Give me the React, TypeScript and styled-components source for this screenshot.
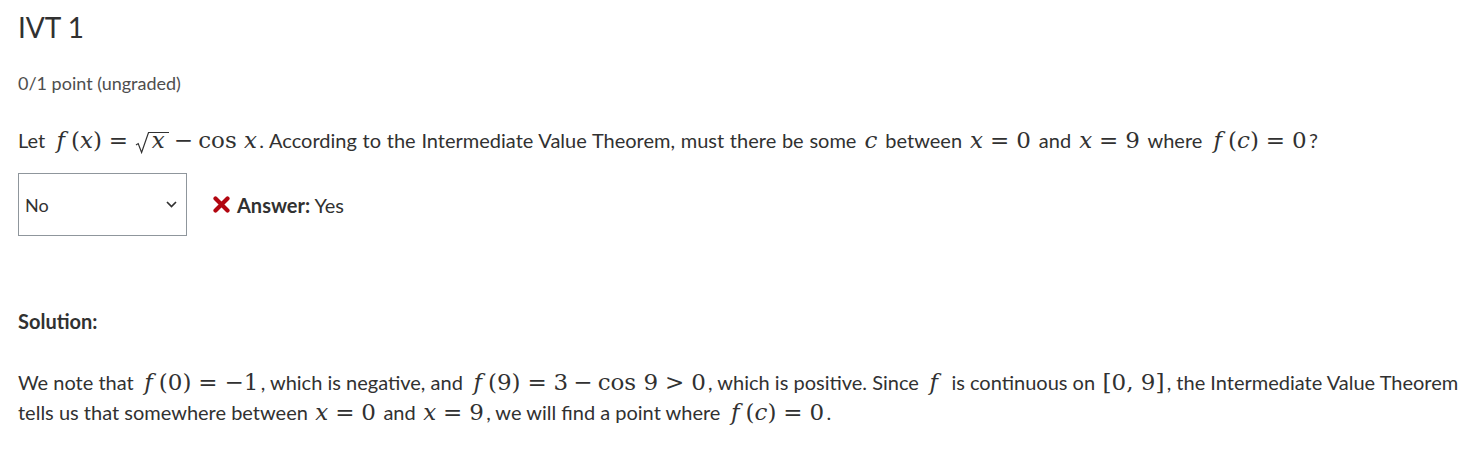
import styled, { createGlobalStyle } from "styled-components";

const Global = createGlobalStyle`
  body {
    margin: 0;
    background: #fff;
  }
`;

const Page = styled.div`
  padding: 0 12px 0 18px;
  color: #313131;
  font-family: Lato, "Noto Sans", sans-serif;
  font-size: 20px;
`;

const Title = styled.h2`
  margin: 0;
  height: 55px;
  line-height: 55px;
  font-size: 28px;
  font-weight: 400;
  color: #313131;
`;

const Points = styled.div`
  margin-top: 17px;
  line-height: 22px;
  font-size: 18px;
  color: #4e4e4e;
`;

const Question = styled.p`
  margin: 31px 0 0;
  line-height: 30px;
  word-spacing: 0.6px;
`;

const AnswerRow = styled.div`
  margin-top: 18px;
  display: flex;
  align-items: center;
  gap: 26px;
`;

const Select = styled.div`
  box-sizing: border-box;
  width: 169px;
  height: 63px;
  border: 1px solid #8f969c;
  display: flex;
  align-items: center;
  justify-content: space-between;
  padding: 0 9px 0 6px;
  font-size: 18px;
  color: #313131;
`;

const Status = styled.div`
  display: flex;
  align-items: center;
  gap: 7px;
`;

const Bold = styled.b`
  font-weight: 700;
`;

const SolutionLabel = styled.div`
  margin-top: 74px;
  line-height: 22px;
  font-weight: 700;
`;

const Solution = styled.p`
  margin: 35px 0 0;
  line-height: 30px;
`;

const Mth = styled.span`
  font-family: "DejaVu Serif", "Liberation Serif", serif;
  font-size: 23px;
  white-space: nowrap;
  word-spacing: 0;
  margin: 0 0.1em;
`;

const V = styled.i`
  font-style: italic;
`;

const Fn = styled.i`
  font-style: italic;
  margin: 0 0.26em 0 0.14em;
`;

const Rel = styled.span`
  margin: 0 0.3em;
`;

const Op = styled.span`
  margin: 0 0.22em;
`;

const Radical = styled.span`
  display: inline-flex;
`;

const RadicalSign = styled.svg`
  width: 14px;
  align-self: stretch;
  flex: none;
`;

const Radicand = styled.span`
  align-self: baseline;
  border-top: 1.2px solid currentColor;
  padding: 0 0.18em 7px 0.12em;
  line-height: 14px;
`;

const Caret = () => (
  <svg width="11" height="7" viewBox="0 0 11 7">
    <path d="M1 1 L5.5 5.5 L10 1" fill="none" stroke="#313131" strokeWidth="1.7" />
  </svg>
);

const Cross = () => (
  <svg width="17" height="17" viewBox="0 0 17 17">
    <path d="M2.5 2.5 L14.5 14.5 M14.5 2.5 L2.5 14.5" stroke="#b20610" strokeWidth="4.2" strokeLinecap="round" />
  </svg>
);

const Sqrt = ({ children }: { children: React.ReactNode }) => (
  <Radical>
    <RadicalSign viewBox="0 0 14 22" preserveAspectRatio="none">
      <path d="M1 13 L3.2 11.6 L6.6 20.5 L13.5 0.6 L14 0.6" fill="none" stroke="#313131" strokeWidth="1.2" />
    </RadicalSign>
    <Radicand>{children}</Radicand>
  </Radical>
);

export default function App() {
  return (
    <Page>
      <Global />
      <Title>IVT 1</Title>
      <Points>0/1 point (ungraded)</Points>
      <Question>
        Let{" "}
        <Mth>
          <Fn>f</Fn>(<V>x</V>)<Rel>=</Rel>
          <Sqrt>
            <V>x</V>
          </Sqrt>
          <Op>−</Op>cos <V>x</V>
        </Mth>
        . According to the Intermediate Value Theorem, must there be some{" "}
        <Mth>
          <V>c</V>
        </Mth>{" "}
        between{" "}
        <Mth>
          <V>x</V>
          <Rel>=</Rel>0
        </Mth>{" "}
        and{" "}
        <Mth>
          <V>x</V>
          <Rel>=</Rel>9
        </Mth>{" "}
        where{" "}
        <Mth>
          <Fn>f</Fn>(<V>c</V>)<Rel>=</Rel>0
        </Mth>
        ?
      </Question>
      <AnswerRow>
        <Select>
          <span>No</span>
          <Caret />
        </Select>
        <Status>
          <Cross />
          <span>
            <Bold>Answer:</Bold> Yes
          </span>
        </Status>
      </AnswerRow>
      <SolutionLabel>Solution:</SolutionLabel>
      <Solution>
        We note that{" "}
        <Mth>
          <Fn>f</Fn>(0)<Rel>=</Rel>−1
        </Mth>
        , which is negative, and{" "}
        <Mth>
          <Fn>f</Fn>(9)<Rel>=</Rel>3<Op>−</Op>cos 9<Rel>&gt;</Rel>0
        </Mth>
        , which is positive. Since{" "}
        <Mth>
          <Fn>f</Fn>
        </Mth>{" "}
        is continuous on{" "}
        <Mth>[0, 9]</Mth>, the Intermediate Value Theorem tells us that somewhere between{" "}
        <Mth>
          <V>x</V>
          <Rel>=</Rel>0
        </Mth>{" "}
        and{" "}
        <Mth>
          <V>x</V>
          <Rel>=</Rel>9
        </Mth>
        , we will find a point where{" "}
        <Mth>
          <Fn>f</Fn>(<V>c</V>)<Rel>=</Rel>0
        </Mth>
        .
      </Solution>
    </Page>
  );
}
